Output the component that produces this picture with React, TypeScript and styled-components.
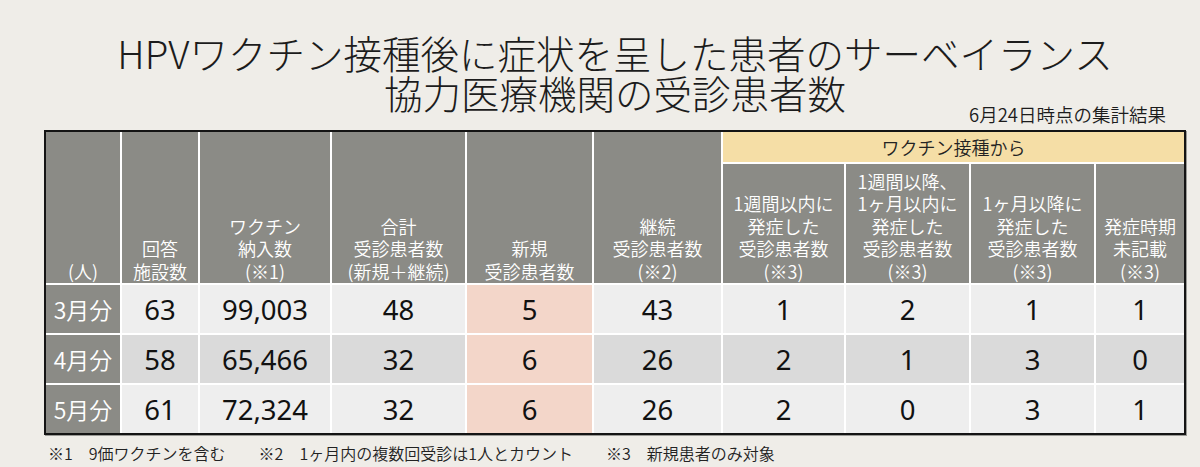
import React from 'react'
import styled, { createGlobalStyle } from 'styled-components'

const GlobalStyle = createGlobalStyle`
  html, body {
    margin: 0;
    padding: 0;
    background: #efede8;
  }
  body {
    font-family: "Noto Sans CJK JP", "Noto Sans", sans-serif;
    color: #1a1a1a;
  }
`

const Page = styled.div`
  width: 1142px;
  margin-left: 44px;
`

const HeaderArea = styled.div`
  display: grid;
  height: 130px;
  box-sizing: border-box;
  padding: 32px 0 4px;
`

const Title = styled.h1`
  grid-area: 1 / 1;
  margin: 0;
  font-size: 38.5px;
  font-weight: 300;
  text-align: center;
  color: #1c1c1c;
`

const TitleLine = styled.span`
  display: block;
  height: 40px;
  line-height: 40px;
`

const AsOf = styled.div`
  grid-area: 1 / 1;
  justify-self: end;
  align-self: end;
  margin-right: 20px;
  font-size: 18.5px;
  line-height: 24px;
  font-weight: 350;
  color: #1c1c1c;
`

const Table = styled.div`
  display: grid;
  grid-template-columns: 74px 76px 130px 133px 125px 127px 121px 123px 123px 88px;
  grid-template-rows: 30px 119px 48px 48px 48px;
  gap: 2px;
  background: #ffffff;
  border: 2px solid #141414;
  box-shadow: 1px 1px 0 #9a9a96;
`

const HeadCell = styled.div<{ $span?: boolean }>`
  grid-row: ${({ $span }) => ($span ? 'span 2' : 'auto')};
  background: #8b8b86;
  color: #ffffff;
  display: flex;
  flex-direction: column;
  justify-content: flex-end;
  align-items: center;
  text-align: center;
  font-size: 18px;
  line-height: 22.5px;
  font-weight: 350;
  white-space: pre-line;
  padding-bottom: 1px;
`

const GroupCell = styled.div`
  grid-column: span 4;
  background: #f5dea6;
  color: #222;
  display: flex;
  align-items: center;
  justify-content: center;
  font-size: 18px;
  font-weight: 350;
`

const RowLabel = styled.div`
  background: #8b8b86;
  color: #ffffff;
  display: flex;
  align-items: center;
  justify-content: center;
  font-size: 23px;
  font-weight: 350;
`

const tones = {
  light: '#eeeeee',
  mid: '#dadada',
  salmon: '#f3d6c9',
}

const Cell = styled.div<{ $tone: keyof typeof tones }>`
  background: ${({ $tone }) => tones[$tone]};
  display: flex;
  align-items: center;
  justify-content: center;
  font-family: "Noto Sans", sans-serif;
  font-size: 27.5px;
  color: #111;
`

const Notes = styled.div`
  display: flex;
  margin: 8px 0 0 4px;
  font-size: 16px;
  line-height: 20px;
  font-weight: 350;
  color: #222;
`

const Note = styled.div`
  display: flex;
  gap: 16px;
  margin-right: 33px;
`

const heads: { text: string }[] = [
  { text: '(人)' },
  { text: '回答\n施設数' },
  { text: 'ワクチン\n納入数\n(※1)' },
  { text: '合計\n受診患者数\n(新規＋継続)' },
  { text: '新規\n受診患者数' },
  { text: '継続\n受診患者数\n(※2)' },
]

const subHeads = [
  '1週間以内に\n発症した\n受診患者数\n(※3)',
  '1週間以降、\n1ヶ月以内に\n発症した\n受診患者数\n(※3)',
  '1ヶ月以降に\n発症した\n受診患者数\n(※3)',
  '発症時期\n未記載\n(※3)',
]

const rows: { label: string; tone: 'light' | 'mid'; values: string[] }[] = [
  { label: '3月分', tone: 'light', values: ['63', '99,003', '48', '5', '43', '1', '2', '1', '1'] },
  { label: '4月分', tone: 'mid', values: ['58', '65,466', '32', '6', '26', '2', '1', '3', '0'] },
  { label: '5月分', tone: 'light', values: ['61', '72,324', '32', '6', '26', '2', '0', '3', '1'] },
]

const notes = [
  ['※1', '9価ワクチンを含む'],
  ['※2', '1ヶ月内の複数回受診は1人とカウント'],
  ['※3', '新規患者のみ対象'],
]

export default function App() {
  return (
    <>
      <GlobalStyle />
      <Page>
        <HeaderArea>
          <Title>
            <TitleLine>HPVワクチン接種後に症状を呈した患者のサーベイランス</TitleLine>
            <TitleLine>協力医療機関の受診患者数</TitleLine>
          </Title>
          <AsOf>6月24日時点の集計結果</AsOf>
        </HeaderArea>
        <Table>
          {heads.map((h, i) => (
            <HeadCell key={i} $span>
              {h.text}
            </HeadCell>
          ))}
          <GroupCell>ワクチン接種から</GroupCell>
          {subHeads.map((s, i) => (
            <HeadCell key={`s${i}`}>{s}</HeadCell>
          ))}
          {rows.map((r) => (
            <React.Fragment key={r.label}>
              <RowLabel>{r.label}</RowLabel>
              {r.values.map((v, i) => (
                <Cell key={i} $tone={i === 3 ? 'salmon' : r.tone}>
                  {v}
                </Cell>
              ))}
            </React.Fragment>
          ))}
        </Table>
        <Notes>
          {notes.map(([mark, text]) => (
            <Note key={mark}>
              <span>{mark}</span>
              <span>{text}</span>
            </Note>
          ))}
        </Notes>
      </Page>
    </>
  )
}
